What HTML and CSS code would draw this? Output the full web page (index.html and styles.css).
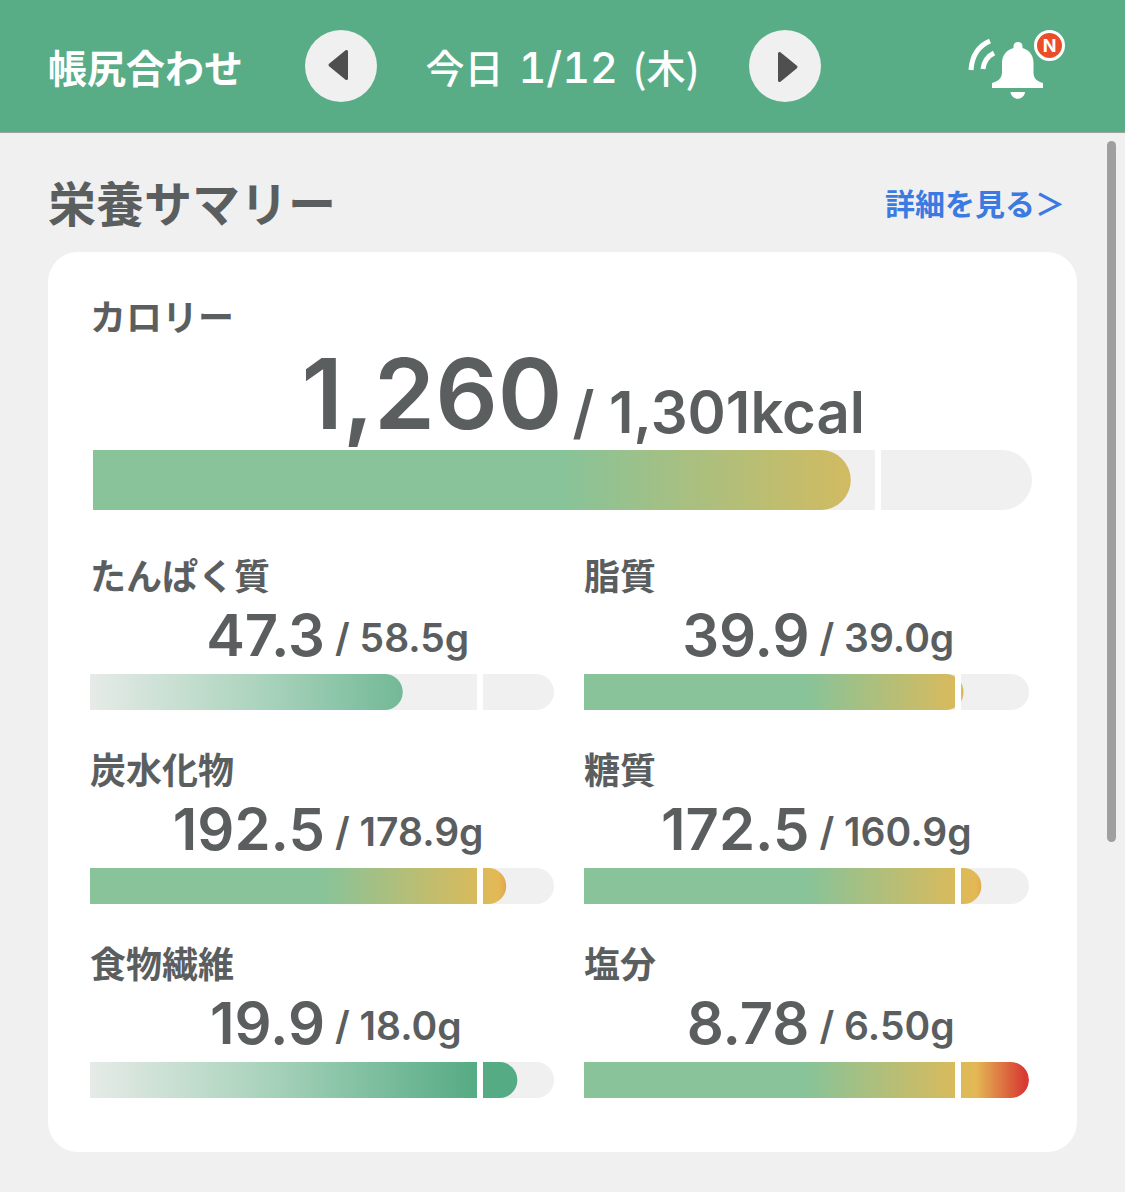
FILE: index.html
```
<!DOCTYPE html>
<html lang="ja">

<head>
    <meta charset="UTF-8">
    <meta name="viewport" content="width=device-width, initial-scale=1.0">
    <title>栄養サマリー</title>
    <link rel="stylesheet" href="styles.css">
</head>

<body>
    <header class="header">
        <p class="header-title">帳尻合わせ</p>
        <nav class="date-nav">
            <button type="button" class="round-btn" aria-label="前の日">
                <svg viewBox="0 0 72 72" aria-hidden="true">
                    <path d="M25 35 L41.500 21.500 V48.500 Z" />
                </svg>
            </button>
            <p class="date">今日 <span>1/12</span> (木)</p>
            <button type="button" class="round-btn" aria-label="次の日">
                <svg viewBox="0 0 72 72" aria-hidden="true">
                    <path d="M47 37 L30.500 23.500 V50.500 Z" />
                </svg>
            </button>
        </nav>
        <button type="button" class="bell" aria-label="お知らせ">
            <svg viewBox="0 0 98 72" aria-hidden="true">
                <path class="wave" d="M23 11 C11 16 5 26 4 40" />
                <path class="wave" d="M27 23 C21 26 17 31 16 39" />
                <path d="M46.500 16 Q47 12 51 12 Q55 12 55.500 16 L55.500 18 C63 20 66.500 26 66.500 33 V42 C66.500 48 69 51 76 53 V58 H25 V53 C32 51 35 48 35 42 V33 C35 26 39 20 46.500 18 Z" />
                <path d="M43.500 62 H58 C57 71 44.500 71 43.500 62 Z" />
            </svg>
            <span class="badge">N</span>
        </button>
    </header>

    <main class="content">
        <div class="section-head">
            <h1>栄養サマリー</h1>
            <a href="#detail">詳細を見る＞</a>
        </div>

        <section class="card" id="detail">
            <!-- calorie -->
            <div class="calorie">
                <h2>カロリー</h2>
                <p class="amount"><strong>1,260</strong><span>/ 1,301kcal</span></p>
                <div class="track">
                    <div class="fill limit" style="--value: 80.7%"></div>
                </div>
            </div>

            <!-- nutrients, "limit" bars turn red past the goal, "reach" bars stay green -->
            <div class="nutrients">
                <div class="nutrient">
                    <h2>たんぱく質</h2>
                    <p class="amount"><strong>47.3</strong><span>/ 58.5g</span></p>
                    <div class="track">
                        <div class="fill reach" style="--value: 67.4%"></div>
                    </div>
                </div>
                <div class="nutrient">
                    <h2>脂質</h2>
                    <p class="amount"><strong>39.9</strong><span>/ 39.0g</span></p>
                    <div class="track">
                        <div class="fill limit" style="--value: 85.3%"></div>
                    </div>
                </div>
                <div class="nutrient">
                    <h2>炭水化物</h2>
                    <p class="amount"><strong>192.5</strong><span>/ 178.9g</span></p>
                    <div class="track">
                        <div class="fill limit" style="--value: 89.7%"></div>
                    </div>
                </div>
                <div class="nutrient">
                    <h2>糖質</h2>
                    <p class="amount"><strong>172.5</strong><span>/ 160.9g</span></p>
                    <div class="track">
                        <div class="fill limit" style="--value: 89.3%"></div>
                    </div>
                </div>
                <div class="nutrient">
                    <h2>食物繊維</h2>
                    <p class="amount"><strong>19.9</strong><span>/ 18.0g</span></p>
                    <div class="track">
                        <div class="fill reach" style="--value: 92.1%"></div>
                    </div>
                </div>
                <div class="nutrient">
                    <h2>塩分</h2>
                    <p class="amount"><strong>8.78</strong><span>/ 6.50g</span></p>
                    <div class="track">
                        <div class="fill limit" style="--value: 100%"></div>
                    </div>
                </div>
            </div>
        </section>

        <div class="scroll-thumb"></div>
    </main>
</body>

</html>
```

FILE: styles.css
```
* {
    box-sizing: border-box;
    padding: 0;
    margin: 0;
}

body {
    background-color: #f0f0f0;
    color: #5b5e5f;
    font-family: "Inter", "Noto Sans CJK JP", sans-serif;
}

button {
    border: 0;
    background-color: transparent;
    cursor: pointer;
}

svg {
    display: block;
    width: 100%;
    height: 100%;
}

/* header */
.header {
    display: grid;
    grid-template-columns: 1fr 516px 1fr;
    align-items: center;
    padding: 30px 48px;
    border-bottom: 1px solid #9aa39e;
    background-color: #58ad87;
    color: #fff;
    font-family: "Noto Sans CJK JP", sans-serif;
    font-size: 39px;
    font-weight: 700;
    line-height: 72px;
}

.date-nav {
    display: flex;
    justify-content: space-between;
    align-items: center;
}

.date {
    font-weight: 500;
}

.date span {
    margin: 0 6px;
    font-family: "Inter", sans-serif;
    font-size: 43px;
    font-variant-numeric: tabular-nums;
    line-height: 1;
}

.round-btn {
    width: 72px;
    height: 72px;
    border-radius: 50%;
    background-color: #f0f0f0;
}

.round-btn path {
    fill: #4f4f4f;
    stroke: #4f4f4f;
    stroke-width: 3;
    stroke-linejoin: round;
}

.bell {
    position: relative;
    justify-self: end;
    width: 98px;
    height: 72px;
    margin-right: 12px;
}

.bell path {
    fill: #fff;
}

.bell .wave {
    fill: none;
    stroke: #fff;
    stroke-width: 5;
}

.badge {
    position: absolute;
    top: 0;
    right: 0;
    width: 31px;
    height: 31px;
    border: 3px solid #fff;
    border-radius: 50%;
    background-color: #ea4e28;
    color: #fff;
    font-family: "Inter", sans-serif;
    font-size: 18px;
    font-weight: 700;
    line-height: 25px;
    text-align: center;
}

/* summary */
.content {
    position: relative;
    padding: 24px 48px 40px;
}

.section-head {
    display: flex;
    justify-content: space-between;
    align-items: center;
    padding-right: 12px;
    line-height: 95px;
}

.section-head h1 {
    font-size: 48px;
    font-weight: 700;
}

.section-head a {
    color: #3b7ae0;
    font-size: 30px;
    font-weight: 700;
    text-decoration: none;
}

.card {
    padding: 47px 42px 54px;
    border-radius: 30px;
    background-color: #fff;
}

.card h2 {
    font-size: 36px;
    font-weight: 700;
    line-height: 38px;
}

.amount {
    display: grid;
    grid-template-columns: 1fr 1fr;
    align-items: end;
    padding-left: 6px;
    font-size: 39px;
    font-weight: 600;
    line-height: 72px;
}

.amount strong {
    font-size: 58px;
    font-weight: 600;
    line-height: 78px;
    text-align: right;
}

.amount span {
    padding-left: 10px;
    white-space: nowrap;
}

.track {
    position: relative;
    height: 36px;
    border-radius: 0 18px 18px 0;
    background-color: #f0f0f0;
    overflow: hidden;
}

/* goal line */
.track::after {
    content: "";
    position: absolute;
    top: 0;
    bottom: 0;
    left: 83.33%;
    width: 6px;
    background-color: #fff;
}

.fill {
    height: 100%;
    clip-path: inset(0 calc(100% - var(--value)) 0 0 round 0 18px 18px 0);
}

.limit {
    background: linear-gradient(to right, #88c399 50%, #e3b954 88%, #d83b32 99%);
}

.reach {
    background: linear-gradient(to right, #e6ebe7, #a5d1b9 40%, #55ab84 83%);
}

.calorie {
    margin-bottom: 48px;
}

.calorie .amount {
    padding-left: 0;
    font-size: 58px;
    line-height: 76px;
}

.calorie .amount strong {
    font-size: 98px;
    line-height: 113px;
}

.calorie .amount span {
    padding-left: 10px;
}

.calorie .track {
    height: 60px;
    margin: 0 3px;
    border-radius: 0 30px 30px 0;
}

.calorie .fill {
    clip-path: inset(0 calc(100% - var(--value)) 0 0 round 0 30px 30px 0);
}

.nutrients {
    display: grid;
    grid-template-columns: 464fr 445fr;
    gap: 42px 30px;
    padding-right: 6px;
}

.scroll-thumb {
    position: absolute;
    top: 8px;
    right: 9px;
    width: 9px;
    height: 701px;
    border-radius: 5px;
    background-color: #9f9f9f;
}
```
